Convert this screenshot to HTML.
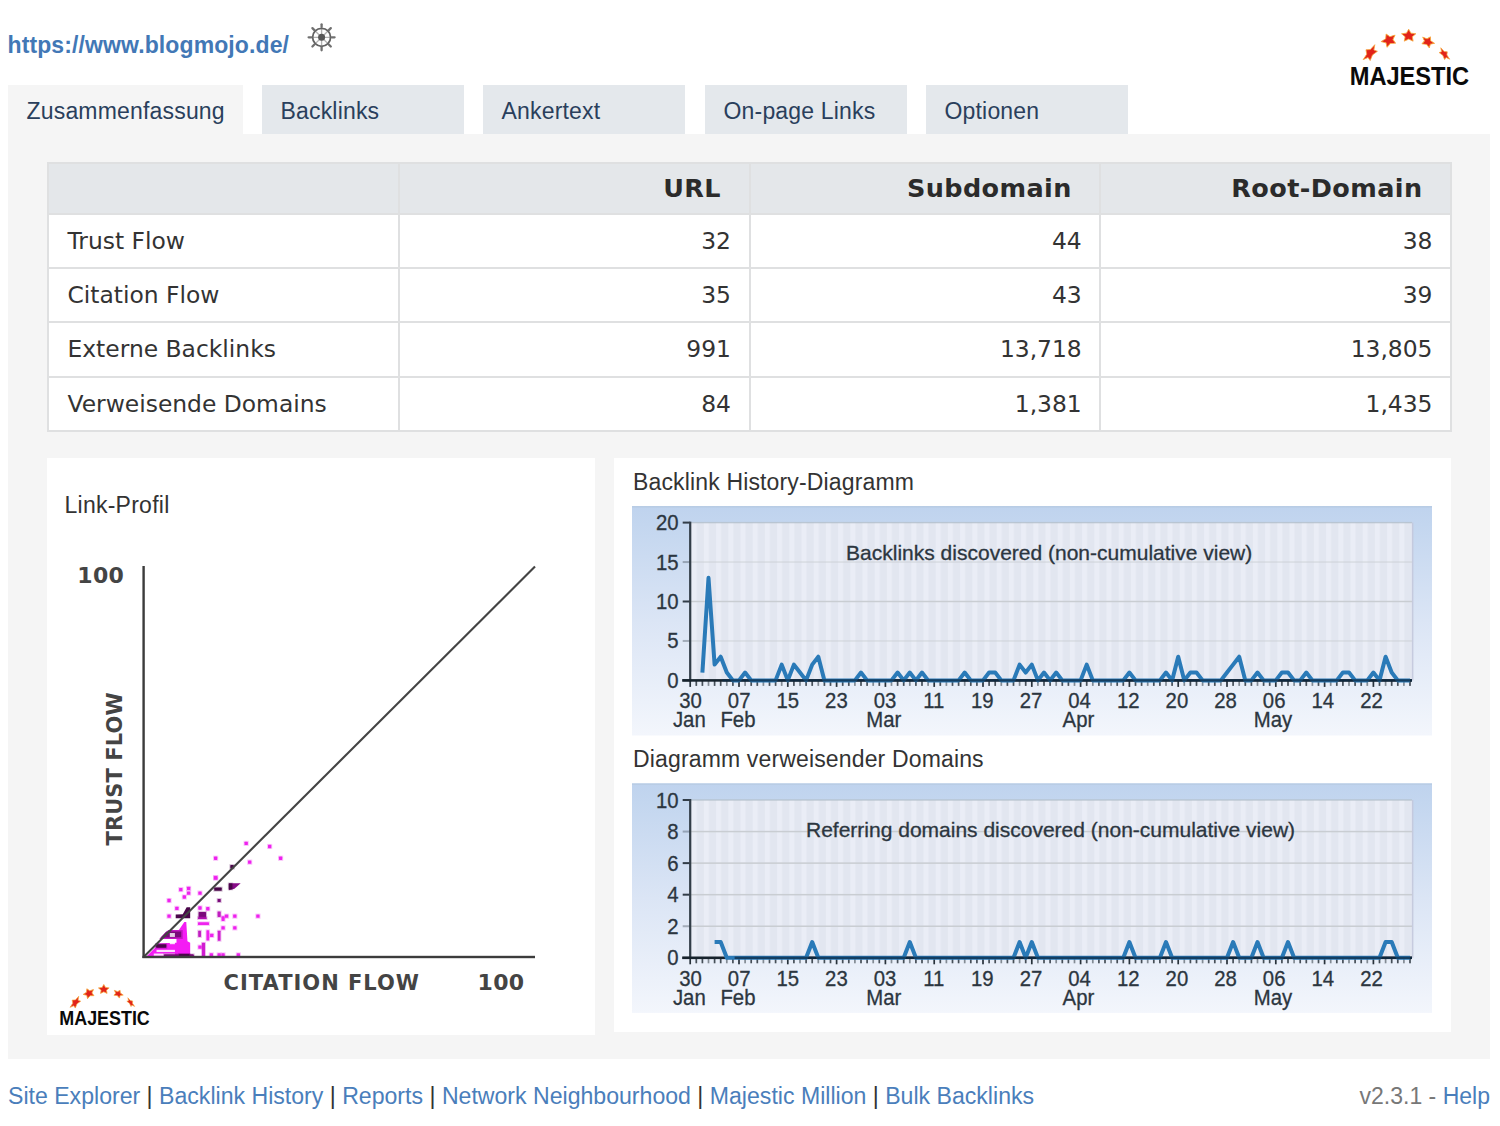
<!DOCTYPE html>
<html lang="de">
<head>
<meta charset="utf-8">
<title>Majestic Backlink Analyzer</title>
<style>
html,body{margin:0;padding:0;background:#fff;}
body{width:1500px;height:1126px;position:relative;overflow:hidden;font-family:"Liberation Sans",Arial,sans-serif;font-size:23px;color:#333;}
a{text-decoration:none;color:#4a7ebb;}
#url{position:absolute;left:7.5px;top:31.5px;font-weight:bold;font-size:23px;line-height:27px;color:#4278b6;white-space:nowrap;letter-spacing:0.11px;}
.tab{position:absolute;top:85px;height:49px;width:202px;background:#e4e8ec;color:#2a3f5c;font-size:23px;line-height:52px;box-sizing:border-box;padding-left:18.5px;white-space:nowrap;letter-spacing:0.18px;}
.tab.act{background:#f5f5f5;width:235px;}
#panel{position:absolute;left:8px;top:134px;width:1482px;height:924.5px;background:#f5f5f5;}
#tbl{position:absolute;left:47px;top:162px;width:1405px;border-collapse:collapse;font-family:"DejaVu Sans",Verdana,sans-serif;font-size:23.4px;color:#333;table-layout:fixed;background:#fff;}
#tbl td,#tbl th{border:2px solid #dfe0e1;padding:0 17.5px 0 18.5px;box-sizing:border-box;}
#tbl th{background:#e4e7ea;font-weight:bold;font-size:25.5px;letter-spacing:0.4px;text-align:right;height:50.7px;padding-right:27.5px;color:#2b2b2b;}
#tbl td{height:54.3px;text-align:right;}
#tbl td:first-child{text-align:left;}
.card{position:absolute;background:#fff;}
#c1{left:46.5px;top:457.5px;width:548.5px;height:577.7px;}
#c2{left:614px;top:457.5px;width:837px;height:574.5px;}
.h{position:absolute;font-size:23px;line-height:27px;color:#333;white-space:nowrap;}
#foot{position:absolute;left:8px;top:1082.5px;font-size:23.1px;line-height:27px;white-space:nowrap;color:#333;}
#ver{position:absolute;right:10px;top:1082.5px;font-size:23px;line-height:27px;white-space:nowrap;color:#777;}
#gfx{position:absolute;left:0;top:0;width:1500px;height:1126px;pointer-events:none;}
.ct{font-family:"Liberation Sans",Arial,sans-serif;font-size:21px;fill:#2c3640;stroke:#2c3640;stroke-width:0.3px;}
.ca{font-family:"Liberation Sans",Arial,sans-serif;font-size:21.3px;fill:#2c3640;stroke:#2c3640;stroke-width:0.3px;}
.sb{font-family:"DejaVu Sans",Verdana,sans-serif;font-weight:bold;font-size:21px;fill:#444;}
</style>
</head>
<body>
<div id="url">https://www.blogmojo.de/</div>
<div class="tab act" style="left:8px">Zusammenfassung</div>
<div class="tab" style="left:262px">Backlinks</div>
<div class="tab" style="left:483px">Ankertext</div>
<div class="tab" style="left:705px">On-page Links</div>
<div class="tab" style="left:926px">Optionen</div>
<div id="panel"></div>
<table id="tbl">
<tr><th></th><th>URL</th><th>Subdomain</th><th>Root-Domain</th></tr>
<tr><td>Trust Flow</td><td>32</td><td>44</td><td>38</td></tr>
<tr><td>Citation Flow</td><td>35</td><td>43</td><td>39</td></tr>
<tr><td>Externe Backlinks</td><td>991</td><td>13,718</td><td>13,805</td></tr>
<tr><td>Verweisende Domains</td><td>84</td><td>1,381</td><td>1,435</td></tr>
</table>
<div class="card" id="c1">
<div class="h" style="left:18px;top:34.5px;letter-spacing:0.25px">Link-Profil</div>
</div>
<div class="card" id="c2">
<div class="h" style="left:19px;top:11.5px;letter-spacing:0.15px">Backlink History-Diagramm</div>
<div class="h" style="left:19px;top:288.5px;letter-spacing:0.15px">Diagramm verweisender Domains</div>
</div>
<div id="foot"><a>Site Explorer</a> | <a>Backlink History</a> | <a>Reports</a> | <a>Network Neighbourhood</a> | <a>Majestic Million</a> | <a>Bulk Backlinks</a></div>
<div id="ver">v2.3.1 - <a>Help</a></div>
<svg id="gfx" width="1500" height="1126" viewBox="0 0 1500 1126">
<g id="wheel"><g stroke="#666" fill="none" stroke-linecap="round"><circle cx="321.6" cy="37.3" r="9.0" stroke-width="1.8" stroke="#626262"/><line x1="324.60" y1="37.30" x2="330.60" y2="37.30" stroke-width="1.3" opacity="0.5"/><line x1="331.80" y1="37.30" x2="334.60" y2="37.30" stroke-width="2.3" stroke="#707070"/><line x1="323.72" y1="39.42" x2="327.96" y2="43.66" stroke-width="1.3" opacity="0.5"/><line x1="328.81" y1="44.51" x2="330.79" y2="46.49" stroke-width="2.3" stroke="#707070"/><line x1="321.60" y1="40.30" x2="321.60" y2="46.30" stroke-width="1.3" opacity="0.5"/><line x1="321.60" y1="47.50" x2="321.60" y2="50.30" stroke-width="2.3" stroke="#707070"/><line x1="319.48" y1="39.42" x2="315.24" y2="43.66" stroke-width="1.3" opacity="0.5"/><line x1="314.39" y1="44.51" x2="312.41" y2="46.49" stroke-width="2.3" stroke="#707070"/><line x1="318.60" y1="37.30" x2="312.60" y2="37.30" stroke-width="1.3" opacity="0.5"/><line x1="311.40" y1="37.30" x2="308.60" y2="37.30" stroke-width="2.3" stroke="#707070"/><line x1="319.48" y1="35.18" x2="315.24" y2="30.94" stroke-width="1.3" opacity="0.5"/><line x1="314.39" y1="30.09" x2="312.41" y2="28.11" stroke-width="2.3" stroke="#707070"/><line x1="321.60" y1="34.30" x2="321.60" y2="28.30" stroke-width="1.3" opacity="0.5"/><line x1="321.60" y1="27.10" x2="321.60" y2="24.30" stroke-width="2.3" stroke="#707070"/><line x1="323.72" y1="35.18" x2="327.96" y2="30.94" stroke-width="1.3" opacity="0.5"/><line x1="328.81" y1="30.09" x2="330.79" y2="28.11" stroke-width="2.3" stroke="#707070"/><circle cx="321.6" cy="37.3" r="3.5" fill="#575757" stroke="none"/></g></g>
<g id="logo"><g><polygon transform="translate(1370.3,53.2) rotate(-52) scale(1,0.55)" points="0.00,-10.00 2.94,-4.05 9.51,-3.09 4.76,1.55 5.88,8.09 0.00,5.00 -5.88,8.09 -4.76,1.55 -9.51,-3.09 -2.94,-4.05" fill="#e2231a" stroke="#f7a83c" stroke-width="0.90" stroke-linejoin="round"/><polygon transform="translate(1389,40.2) rotate(-25) scale(1,0.85)" points="0.00,-8.00 2.35,-3.24 7.61,-2.47 3.80,1.24 4.70,6.47 0.00,4.00 -4.70,6.47 -3.80,1.24 -7.61,-2.47 -2.35,-3.24" fill="#e2231a" stroke="#f7a83c" stroke-width="0.90" stroke-linejoin="round"/><polygon transform="translate(1408.7,35.8) rotate(0) scale(1,0.88)" points="0.00,-7.50 2.20,-3.03 7.13,-2.32 3.57,1.16 4.41,6.07 0.00,3.75 -4.41,6.07 -3.57,1.16 -7.13,-2.32 -2.20,-3.03" fill="#e2231a" stroke="#f7a83c" stroke-width="0.90" stroke-linejoin="round"/><polygon transform="translate(1427.8,41.8) rotate(28) scale(1,0.8)" points="0.00,-7.00 2.06,-2.83 6.66,-2.16 3.33,1.08 4.11,5.66 0.00,3.50 -4.11,5.66 -3.33,1.08 -6.66,-2.16 -2.06,-2.83" fill="#e2231a" stroke="#f7a83c" stroke-width="0.90" stroke-linejoin="round"/><polygon transform="translate(1444.3,54.2) rotate(52) scale(1,0.5)" points="0.00,-7.60 2.23,-3.07 7.23,-2.35 3.61,1.17 4.47,6.15 0.00,3.80 -4.47,6.15 -3.61,1.17 -7.23,-2.35 -2.23,-3.07" fill="#e2231a" stroke="#f7a83c" stroke-width="0.90" stroke-linejoin="round"/><text x="1349.7" y="85.4" font-family="Liberation Sans, Arial, sans-serif" font-weight="bold" font-size="26" textLength="119.5" lengthAdjust="spacingAndGlyphs" fill="#0a0a0a">MAJESTIC</text></g></g>
<g id="scatter">
<polygon points="145.95,956.90 155.34,947.50 155.34,943.59 176.49,942.81 176.49,933.41 184.32,922.06 186.27,922.06 187.45,941.24 190.19,942.81 190.19,954.55 194.10,954.94 194.10,956.90" fill="#f41cf4"/><rect x="156.52" y="949.83" width="18.40" height="2.20" fill="#fff" opacity="0.85"/><rect x="169.83" y="942.00" width="5.09" height="2.20" fill="#fff" opacity="0.85"/><rect x="169.83" y="933.78" width="5.09" height="2.20" fill="#fff" opacity="0.85"/><rect x="153.78" y="953.55" width="21.14" height="2.20" fill="#fff" opacity="0.85"/><polygon points="159.26,938.89 168.26,929.89 182.75,929.89 182.75,938.89" fill="#c416c4"/><polygon points="160.43,937.72 166.31,931.45 181.18,931.45 181.18,937.32" fill="#7a0a7a"/><rect x="169.83" y="933.02" width="5.09" height="3.92" fill="#fff" opacity="0.8"/><rect x="155.23" y="943.28" width="11.98" height="5.32" fill="#4a064a" opacity="0.28"/><rect x="156.13" y="944.18" width="10.18" height="3.52" rx="0.6" fill="#4a064a" opacity="1"/><rect x="163.06" y="953.46" width="31.55" height="4.54" fill="#7a0a7a" opacity="0.28"/><rect x="163.96" y="954.36" width="29.75" height="2.74" rx="0.6" fill="#7a0a7a" opacity="1"/><rect x="178.33" y="953.06" width="11.98" height="4.93" fill="#4a064a" opacity="0.28"/><rect x="179.23" y="953.96" width="10.18" height="3.13" rx="0.6" fill="#4a064a" opacity="1"/><polygon points="175.70,918.14 175.70,914.62 182.75,914.23 186.66,907.18 190.19,907.18 190.19,918.14" fill="#4a064a"/><rect x="213.07" y="875.25" width="5.13" height="5.13" fill="#ee22ee" opacity="0.28"/><rect x="213.97" y="876.15" width="3.33" height="3.33" rx="0.6" fill="#ee22ee" opacity="1"/><rect x="178.23" y="887.00" width="5.13" height="5.13" fill="#ee22ee" opacity="0.28"/><rect x="179.13" y="887.90" width="3.33" height="3.33" rx="0.6" fill="#ee22ee" opacity="1"/><rect x="186.06" y="885.82" width="5.13" height="5.13" fill="#ee22ee" opacity="0.28"/><rect x="186.96" y="886.72" width="3.33" height="3.33" rx="0.6" fill="#ee22ee" opacity="1"/><rect x="186.06" y="890.52" width="5.13" height="5.13" fill="#ee22ee" opacity="0.28"/><rect x="186.96" y="891.42" width="3.33" height="3.33" rx="0.6" fill="#ee22ee" opacity="1"/><rect x="181.75" y="894.44" width="5.13" height="5.13" fill="#ee22ee" opacity="0.28"/><rect x="182.65" y="895.34" width="3.33" height="3.33" rx="0.6" fill="#ee22ee" opacity="1"/><rect x="197.41" y="890.52" width="5.13" height="5.13" fill="#ee22ee" opacity="0.28"/><rect x="198.31" y="891.42" width="3.33" height="3.33" rx="0.6" fill="#ee22ee" opacity="1"/><rect x="166.48" y="897.96" width="5.13" height="5.13" fill="#ee22ee" opacity="0.28"/><rect x="167.38" y="898.86" width="3.33" height="3.33" rx="0.6" fill="#ee22ee" opacity="1"/><rect x="174.31" y="905.79" width="5.13" height="5.13" fill="#ee22ee" opacity="0.28"/><rect x="175.21" y="906.69" width="3.33" height="3.33" rx="0.6" fill="#ee22ee" opacity="1"/><rect x="166.48" y="913.62" width="5.13" height="5.13" fill="#ee22ee" opacity="0.28"/><rect x="167.38" y="914.52" width="3.33" height="3.33" rx="0.6" fill="#ee22ee" opacity="1"/><rect x="197.41" y="905.40" width="5.13" height="5.13" fill="#ee22ee" opacity="0.28"/><rect x="198.31" y="906.30" width="3.33" height="3.33" rx="0.6" fill="#ee22ee" opacity="1"/><rect x="205.24" y="906.18" width="5.13" height="5.13" fill="#ee22ee" opacity="0.28"/><rect x="206.14" y="907.08" width="3.33" height="3.33" rx="0.6" fill="#ee22ee" opacity="1"/><rect x="224.03" y="913.62" width="5.13" height="5.13" fill="#ee22ee" opacity="0.28"/><rect x="224.93" y="914.52" width="3.33" height="3.33" rx="0.6" fill="#ee22ee" opacity="1"/><rect x="232.26" y="913.62" width="5.13" height="5.13" fill="#ee22ee" opacity="0.28"/><rect x="233.16" y="914.52" width="3.33" height="3.33" rx="0.6" fill="#ee22ee" opacity="1"/><rect x="255.35" y="913.62" width="5.13" height="5.13" fill="#ee22ee" opacity="0.28"/><rect x="256.25" y="914.52" width="3.33" height="3.33" rx="0.6" fill="#ee22ee" opacity="1"/><rect x="220.51" y="925.37" width="5.13" height="5.13" fill="#ee22ee" opacity="0.28"/><rect x="221.41" y="926.27" width="3.33" height="3.33" rx="0.6" fill="#ee22ee" opacity="1"/><rect x="232.26" y="925.37" width="5.13" height="5.13" fill="#ee22ee" opacity="0.28"/><rect x="233.16" y="926.27" width="3.33" height="3.33" rx="0.6" fill="#ee22ee" opacity="1"/><rect x="209.16" y="932.80" width="5.13" height="5.13" fill="#ee22ee" opacity="0.28"/><rect x="210.06" y="933.70" width="3.33" height="3.33" rx="0.6" fill="#ee22ee" opacity="1"/><rect x="197.41" y="944.55" width="5.13" height="5.13" fill="#ee22ee" opacity="0.28"/><rect x="198.31" y="945.45" width="3.33" height="3.33" rx="0.6" fill="#ee22ee" opacity="1"/><rect x="208.77" y="952.38" width="5.13" height="5.13" fill="#ee22ee" opacity="0.28"/><rect x="209.67" y="953.28" width="3.33" height="3.33" rx="0.6" fill="#ee22ee" opacity="1"/><rect x="216.60" y="952.38" width="5.13" height="5.13" fill="#ee22ee" opacity="0.28"/><rect x="217.50" y="953.28" width="3.33" height="3.33" rx="0.6" fill="#ee22ee" opacity="1"/><rect x="220.51" y="952.38" width="5.13" height="5.13" fill="#ee22ee" opacity="0.28"/><rect x="221.41" y="953.28" width="3.33" height="3.33" rx="0.6" fill="#ee22ee" opacity="1"/><rect x="235.78" y="952.38" width="5.13" height="5.13" fill="#ee22ee" opacity="0.28"/><rect x="236.68" y="953.28" width="3.33" height="3.33" rx="0.6" fill="#ee22ee" opacity="1"/><rect x="243.61" y="840.80" width="5.13" height="5.13" fill="#ee22ee" opacity="0.28"/><rect x="244.51" y="841.70" width="3.33" height="3.33" rx="0.6" fill="#ee22ee" opacity="1"/><rect x="267.10" y="843.93" width="5.13" height="5.13" fill="#ee22ee" opacity="0.28"/><rect x="268.00" y="844.83" width="3.33" height="3.33" rx="0.6" fill="#ee22ee" opacity="1"/><rect x="278.06" y="855.68" width="5.13" height="5.13" fill="#ee22ee" opacity="0.28"/><rect x="278.96" y="856.58" width="3.33" height="3.33" rx="0.6" fill="#ee22ee" opacity="1"/><rect x="247.13" y="859.59" width="5.13" height="5.13" fill="#ee22ee" opacity="0.28"/><rect x="248.03" y="860.49" width="3.33" height="3.33" rx="0.6" fill="#ee22ee" opacity="1"/><rect x="213.07" y="855.68" width="5.13" height="5.13" fill="#ee22ee" opacity="0.28"/><rect x="213.97" y="856.58" width="3.33" height="3.33" rx="0.6" fill="#ee22ee" opacity="1"/><rect x="213.07" y="875.25" width="5.13" height="5.13" fill="#ee22ee" opacity="0.28"/><rect x="213.97" y="876.15" width="3.33" height="3.33" rx="0.6" fill="#ee22ee" opacity="1"/><rect x="197.12" y="921.35" width="12.76" height="4.54" fill="#ee22ee" opacity="0.28"/><rect x="198.02" y="922.25" width="10.96" height="2.74" rx="0.6" fill="#ee22ee" opacity="1"/><rect x="197.31" y="929.77" width="4.54" height="8.06" fill="#c01cc0" opacity="0.28"/><rect x="198.21" y="930.67" width="2.74" height="6.26" rx="0.6" fill="#c01cc0" opacity="1"/><rect x="205.54" y="929.38" width="4.54" height="11.98" fill="#ee22ee" opacity="0.28"/><rect x="206.44" y="930.28" width="2.74" height="10.18" rx="0.6" fill="#ee22ee" opacity="1"/><rect x="216.89" y="929.77" width="4.54" height="11.98" fill="#d01cd0" opacity="0.28"/><rect x="217.79" y="930.67" width="2.74" height="10.18" rx="0.6" fill="#d01cd0" opacity="1"/><rect x="201.03" y="941.91" width="4.93" height="15.89" fill="#d01cd0" opacity="0.28"/><rect x="201.93" y="942.81" width="3.13" height="14.09" rx="0.6" fill="#d01cd0" opacity="1"/><rect x="216.69" y="910.59" width="4.93" height="7.28" fill="#c01cc0" opacity="0.28"/><rect x="217.59" y="911.49" width="3.13" height="5.48" rx="0.6" fill="#c01cc0" opacity="1"/><rect x="220.61" y="915.28" width="4.93" height="6.50" fill="#ee22ee" opacity="0.28"/><rect x="221.51" y="916.18" width="3.13" height="4.70" rx="0.6" fill="#ee22ee" opacity="1"/><rect x="197.71" y="911.17" width="9.24" height="7.67" fill="#7a0a7a" opacity="0.28"/><rect x="198.61" y="912.07" width="7.44" height="5.87" rx="0.6" fill="#7a0a7a" opacity="1"/><rect x="197.12" y="916.26" width="10.41" height="3.76" fill="#b010b0" opacity="0.28"/><rect x="198.02" y="917.16" width="8.61" height="1.96" rx="0.6" fill="#b010b0" opacity="1"/><rect x="213.37" y="886.70" width="9.24" height="4.93" fill="#4a064a" opacity="0.28"/><rect x="214.27" y="887.60" width="7.44" height="3.13" rx="0.6" fill="#4a064a" opacity="1"/><rect x="216.69" y="898.06" width="4.93" height="4.93" fill="#7a0a7a" opacity="0.28"/><rect x="217.59" y="898.96" width="3.13" height="3.13" rx="0.6" fill="#7a0a7a" opacity="1"/><rect x="229.42" y="864.19" width="5.32" height="5.32" fill="#4a064a" opacity="0.28"/><rect x="230.32" y="865.09" width="3.52" height="3.52" rx="0.6" fill="#4a064a" opacity="1"/><polygon points="228.95,883.30 240.69,883.30 234.43,888.78 228.95,890.35" fill="#8a0c8a"/><rect x="227.85" y="882.59" width="5.32" height="7.67" fill="#4a064a" opacity="0.28"/><rect x="228.75" y="883.49" width="3.52" height="5.87" rx="0.6" fill="#4a064a" opacity="1"/><line x1="143.6" y1="956.9" x2="535" y2="566.5" stroke="#444" stroke-width="2.1"/><rect x="142.4" y="566" width="2.4" height="392" fill="#3c3c3c"/><rect x="142.4" y="955.8" width="392.6" height="2.4" fill="#3c3c3c"/>
<text x="77.3" y="583.2" class="sb" style="font-size:22px;letter-spacing:0.3px">100</text>
<text x="477.6" y="989.6" class="sb" style="font-size:22px;letter-spacing:0.3px">100</text>
<text x="223.6" y="989.6" class="sb" textLength="195.4" lengthAdjust="spacing">CITATION FLOW</text>
<text transform="translate(122.4,845.4) rotate(-90)" class="sb" textLength="153" lengthAdjust="spacing">TRUST FLOW</text>
</g>
<g id="logo2"><g><polygon transform="translate(75.4,1002.6) rotate(-52) scale(1,0.55)" points="0.00,-7.40 2.17,-2.99 7.04,-2.29 3.52,1.14 4.35,5.99 0.00,3.70 -4.35,5.99 -3.52,1.14 -7.04,-2.29 -2.17,-2.99" fill="#e2231a" stroke="#f7a83c" stroke-width="0.80" stroke-linejoin="round"/><polygon transform="translate(89,993.4) rotate(-25) scale(1,0.85)" points="0.00,-6.00 1.76,-2.43 5.71,-1.85 2.85,0.93 3.53,4.85 0.00,3.00 -3.53,4.85 -2.85,0.93 -5.71,-1.85 -1.76,-2.43" fill="#e2231a" stroke="#f7a83c" stroke-width="0.80" stroke-linejoin="round"/><polygon transform="translate(103.8,989.4) rotate(0) scale(1,0.88)" points="0.00,-5.60 1.65,-2.27 5.33,-1.73 2.66,0.87 3.29,4.53 0.00,2.80 -3.29,4.53 -2.66,0.87 -5.33,-1.73 -1.65,-2.27" fill="#e2231a" stroke="#f7a83c" stroke-width="0.80" stroke-linejoin="round"/><polygon transform="translate(118.2,993.8) rotate(28) scale(1,0.75)" points="0.00,-5.30 1.56,-2.14 5.04,-1.64 2.52,0.82 3.12,4.29 0.00,2.65 -3.12,4.29 -2.52,0.82 -5.04,-1.64 -1.56,-2.14" fill="#e2231a" stroke="#f7a83c" stroke-width="0.80" stroke-linejoin="round"/><polygon transform="translate(130.6,1002.6) rotate(52) scale(1,0.45)" points="0.00,-5.80 1.70,-2.35 5.52,-1.79 2.76,0.90 3.41,4.69 0.00,2.90 -3.41,4.69 -2.76,0.90 -5.52,-1.79 -1.70,-2.35" fill="#e2231a" stroke="#f7a83c" stroke-width="0.80" stroke-linejoin="round"/><text x="59.3" y="1025" font-family="Liberation Sans, Arial, sans-serif" font-weight="bold" font-size="20" textLength="90.5" lengthAdjust="spacingAndGlyphs" fill="#0a0a0a">MAJESTIC</text></g></g>
<g id="chart1"><defs><linearGradient id="bgc506" x1="0" y1="0" x2="0" y2="1"><stop offset="0" stop-color="#bfd3ee"/><stop offset="0.08" stop-color="#c3d6ef"/><stop offset="0.5" stop-color="#dbe5f5"/><stop offset="1" stop-color="#f3f6fc"/></linearGradient><pattern id="stc506" x="691.7" y="0" width="12.2" height="10" patternUnits="userSpaceOnUse"><rect x="0" y="0" width="5" height="10" fill="#f1f4fc"/></pattern><linearGradient id="hzc506" x1="0" y1="0" x2="1" y2="0"><stop offset="0" stop-color="#b9cdec" stop-opacity="0.55"/><stop offset="0.12" stop-color="#c9d9f0" stop-opacity="0"/><stop offset="0.9" stop-color="#c9d9f0" stop-opacity="0"/><stop offset="1" stop-color="#bdd0ee" stop-opacity="0.5"/></linearGradient></defs><rect x="632" y="506" width="800" height="229.5" fill="url(#bgc506)"/><rect x="632" y="506" width="800" height="1.6" fill="#b7cbe2" opacity="0.8"/><rect x="690.2" y="522.6" width="721.8" height="157.8" fill="#e2e6f0"/><rect x="690.2" y="522.6" width="721.8" height="157.8" fill="url(#stc506)" opacity="0.5"/><rect x="690.2" y="521.9" width="721.8" height="1.4" fill="#b3bfca" opacity="0.8"/><rect x="1411.8" y="522.6" width="1.6" height="157.8" fill="#c3c8dc" opacity="0.9"/><rect x="690.2" y="640.20" width="721.8" height="1.5" fill="#c9cdd2" opacity="0.55"/><rect x="690.2" y="600.75" width="721.8" height="1.5" fill="#c9cdd2" opacity="1"/><rect x="690.2" y="561.30" width="721.8" height="1.5" fill="#c9cdd2" opacity="0.55"/><rect x="689.1" y="521.60" width="2.2" height="159.80" fill="#323d48"/><rect x="682.7" y="679.40" width="7" height="2" fill="#323d48" opacity="1"/><text transform="translate(678.6,687.90) scale(0.955,1)" text-anchor="end" class="ca">0</text><rect x="682.7" y="639.95" width="7" height="2" fill="#323d48" opacity="0.35"/><text transform="translate(678.6,648.45) scale(0.955,1)" text-anchor="end" class="ca">5</text><rect x="682.7" y="600.50" width="7" height="2" fill="#323d48" opacity="1"/><text transform="translate(678.6,609.00) scale(0.955,1)" text-anchor="end" class="ca">10</text><rect x="682.7" y="561.05" width="7" height="2" fill="#323d48" opacity="0.35"/><text transform="translate(678.6,569.55) scale(0.955,1)" text-anchor="end" class="ca">15</text><rect x="682.7" y="521.60" width="7" height="2" fill="#323d48" opacity="1"/><text transform="translate(678.6,530.10) scale(0.955,1)" text-anchor="end" class="ca">20</text><rect x="689.35" y="680.40" width="1.7" height="6.5" fill="#1d2730" opacity="0.95"/><rect x="695.45" y="680.40" width="1.7" height="5.5" fill="#1d2730" opacity="0.8"/><rect x="701.55" y="680.40" width="1.7" height="5.5" fill="#1d2730" opacity="0.8"/><rect x="707.65" y="680.40" width="1.7" height="5.5" fill="#1d2730" opacity="0.5"/><rect x="713.75" y="680.40" width="1.7" height="5.5" fill="#1d2730" opacity="0.8"/><rect x="719.85" y="680.40" width="1.7" height="5.5" fill="#1d2730" opacity="0.8"/><rect x="725.95" y="680.40" width="1.7" height="5.5" fill="#1d2730" opacity="0.5"/><rect x="732.05" y="680.40" width="1.7" height="5.5" fill="#1d2730" opacity="0.8"/><rect x="738.15" y="680.40" width="1.7" height="6.5" fill="#1d2730" opacity="0.95"/><rect x="744.25" y="680.40" width="1.7" height="5.5" fill="#1d2730" opacity="0.5"/><rect x="750.35" y="680.40" width="1.7" height="5.5" fill="#1d2730" opacity="0.8"/><rect x="756.45" y="680.40" width="1.7" height="5.5" fill="#1d2730" opacity="0.8"/><rect x="762.55" y="680.40" width="1.7" height="5.5" fill="#1d2730" opacity="0.5"/><rect x="768.65" y="680.40" width="1.7" height="5.5" fill="#1d2730" opacity="0.8"/><rect x="774.75" y="680.40" width="1.7" height="5.5" fill="#1d2730" opacity="0.8"/><rect x="780.85" y="680.40" width="1.7" height="5.5" fill="#1d2730" opacity="0.5"/><rect x="786.95" y="680.40" width="1.7" height="6.5" fill="#1d2730" opacity="0.95"/><rect x="793.05" y="680.40" width="1.7" height="5.5" fill="#1d2730" opacity="0.8"/><rect x="799.15" y="680.40" width="1.7" height="5.5" fill="#1d2730" opacity="0.5"/><rect x="805.25" y="680.40" width="1.7" height="5.5" fill="#1d2730" opacity="0.8"/><rect x="811.35" y="680.40" width="1.7" height="5.5" fill="#1d2730" opacity="0.8"/><rect x="817.45" y="680.40" width="1.7" height="5.5" fill="#1d2730" opacity="0.5"/><rect x="823.55" y="680.40" width="1.7" height="5.5" fill="#1d2730" opacity="0.8"/><rect x="829.65" y="680.40" width="1.7" height="5.5" fill="#1d2730" opacity="0.8"/><rect x="835.75" y="680.40" width="1.7" height="6.5" fill="#1d2730" opacity="0.95"/><rect x="841.85" y="680.40" width="1.7" height="5.5" fill="#1d2730" opacity="0.8"/><rect x="847.95" y="680.40" width="1.7" height="5.5" fill="#1d2730" opacity="0.8"/><rect x="854.05" y="680.40" width="1.7" height="5.5" fill="#1d2730" opacity="0.5"/><rect x="860.15" y="680.40" width="1.7" height="5.5" fill="#1d2730" opacity="0.8"/><rect x="866.25" y="680.40" width="1.7" height="5.5" fill="#1d2730" opacity="0.8"/><rect x="872.35" y="680.40" width="1.7" height="5.5" fill="#1d2730" opacity="0.5"/><rect x="878.45" y="680.40" width="1.7" height="5.5" fill="#1d2730" opacity="0.8"/><rect x="884.55" y="680.40" width="1.7" height="6.5" fill="#1d2730" opacity="0.95"/><rect x="890.65" y="680.40" width="1.7" height="5.5" fill="#1d2730" opacity="0.5"/><rect x="896.75" y="680.40" width="1.7" height="5.5" fill="#1d2730" opacity="0.8"/><rect x="902.85" y="680.40" width="1.7" height="5.5" fill="#1d2730" opacity="0.8"/><rect x="908.95" y="680.40" width="1.7" height="5.5" fill="#1d2730" opacity="0.5"/><rect x="915.05" y="680.40" width="1.7" height="5.5" fill="#1d2730" opacity="0.8"/><rect x="921.15" y="680.40" width="1.7" height="5.5" fill="#1d2730" opacity="0.8"/><rect x="927.25" y="680.40" width="1.7" height="5.5" fill="#1d2730" opacity="0.5"/><rect x="933.35" y="680.40" width="1.7" height="6.5" fill="#1d2730" opacity="0.95"/><rect x="939.45" y="680.40" width="1.7" height="5.5" fill="#1d2730" opacity="0.8"/><rect x="945.55" y="680.40" width="1.7" height="5.5" fill="#1d2730" opacity="0.5"/><rect x="951.65" y="680.40" width="1.7" height="5.5" fill="#1d2730" opacity="0.8"/><rect x="957.75" y="680.40" width="1.7" height="5.5" fill="#1d2730" opacity="0.8"/><rect x="963.85" y="680.40" width="1.7" height="5.5" fill="#1d2730" opacity="0.5"/><rect x="969.95" y="680.40" width="1.7" height="5.5" fill="#1d2730" opacity="0.8"/><rect x="976.05" y="680.40" width="1.7" height="5.5" fill="#1d2730" opacity="0.8"/><rect x="982.15" y="680.40" width="1.7" height="6.5" fill="#1d2730" opacity="0.95"/><rect x="988.25" y="680.40" width="1.7" height="5.5" fill="#1d2730" opacity="0.8"/><rect x="994.35" y="680.40" width="1.7" height="5.5" fill="#1d2730" opacity="0.8"/><rect x="1000.45" y="680.40" width="1.7" height="5.5" fill="#1d2730" opacity="0.5"/><rect x="1006.55" y="680.40" width="1.7" height="5.5" fill="#1d2730" opacity="0.8"/><rect x="1012.65" y="680.40" width="1.7" height="5.5" fill="#1d2730" opacity="0.8"/><rect x="1018.75" y="680.40" width="1.7" height="5.5" fill="#1d2730" opacity="0.5"/><rect x="1024.85" y="680.40" width="1.7" height="5.5" fill="#1d2730" opacity="0.8"/><rect x="1030.95" y="680.40" width="1.7" height="6.5" fill="#1d2730" opacity="0.95"/><rect x="1037.05" y="680.40" width="1.7" height="5.5" fill="#1d2730" opacity="0.5"/><rect x="1043.15" y="680.40" width="1.7" height="5.5" fill="#1d2730" opacity="0.8"/><rect x="1049.25" y="680.40" width="1.7" height="5.5" fill="#1d2730" opacity="0.8"/><rect x="1055.35" y="680.40" width="1.7" height="5.5" fill="#1d2730" opacity="0.5"/><rect x="1061.45" y="680.40" width="1.7" height="5.5" fill="#1d2730" opacity="0.8"/><rect x="1067.55" y="680.40" width="1.7" height="5.5" fill="#1d2730" opacity="0.8"/><rect x="1073.65" y="680.40" width="1.7" height="5.5" fill="#1d2730" opacity="0.5"/><rect x="1079.75" y="680.40" width="1.7" height="6.5" fill="#1d2730" opacity="0.95"/><rect x="1085.85" y="680.40" width="1.7" height="5.5" fill="#1d2730" opacity="0.8"/><rect x="1091.95" y="680.40" width="1.7" height="5.5" fill="#1d2730" opacity="0.5"/><rect x="1098.05" y="680.40" width="1.7" height="5.5" fill="#1d2730" opacity="0.8"/><rect x="1104.15" y="680.40" width="1.7" height="5.5" fill="#1d2730" opacity="0.8"/><rect x="1110.25" y="680.40" width="1.7" height="5.5" fill="#1d2730" opacity="0.5"/><rect x="1116.35" y="680.40" width="1.7" height="5.5" fill="#1d2730" opacity="0.8"/><rect x="1122.45" y="680.40" width="1.7" height="5.5" fill="#1d2730" opacity="0.8"/><rect x="1128.55" y="680.40" width="1.7" height="6.5" fill="#1d2730" opacity="0.95"/><rect x="1134.65" y="680.40" width="1.7" height="5.5" fill="#1d2730" opacity="0.8"/><rect x="1140.75" y="680.40" width="1.7" height="5.5" fill="#1d2730" opacity="0.8"/><rect x="1146.85" y="680.40" width="1.7" height="5.5" fill="#1d2730" opacity="0.5"/><rect x="1152.95" y="680.40" width="1.7" height="5.5" fill="#1d2730" opacity="0.8"/><rect x="1159.05" y="680.40" width="1.7" height="5.5" fill="#1d2730" opacity="0.8"/><rect x="1165.15" y="680.40" width="1.7" height="5.5" fill="#1d2730" opacity="0.5"/><rect x="1171.25" y="680.40" width="1.7" height="5.5" fill="#1d2730" opacity="0.8"/><rect x="1177.35" y="680.40" width="1.7" height="6.5" fill="#1d2730" opacity="0.95"/><rect x="1183.45" y="680.40" width="1.7" height="5.5" fill="#1d2730" opacity="0.5"/><rect x="1189.55" y="680.40" width="1.7" height="5.5" fill="#1d2730" opacity="0.8"/><rect x="1195.65" y="680.40" width="1.7" height="5.5" fill="#1d2730" opacity="0.8"/><rect x="1201.75" y="680.40" width="1.7" height="5.5" fill="#1d2730" opacity="0.5"/><rect x="1207.85" y="680.40" width="1.7" height="5.5" fill="#1d2730" opacity="0.8"/><rect x="1213.95" y="680.40" width="1.7" height="5.5" fill="#1d2730" opacity="0.8"/><rect x="1220.05" y="680.40" width="1.7" height="5.5" fill="#1d2730" opacity="0.5"/><rect x="1226.15" y="680.40" width="1.7" height="6.5" fill="#1d2730" opacity="0.95"/><rect x="1232.25" y="680.40" width="1.7" height="5.5" fill="#1d2730" opacity="0.8"/><rect x="1238.35" y="680.40" width="1.7" height="5.5" fill="#1d2730" opacity="0.5"/><rect x="1244.45" y="680.40" width="1.7" height="5.5" fill="#1d2730" opacity="0.8"/><rect x="1250.55" y="680.40" width="1.7" height="5.5" fill="#1d2730" opacity="0.8"/><rect x="1256.65" y="680.40" width="1.7" height="5.5" fill="#1d2730" opacity="0.5"/><rect x="1262.75" y="680.40" width="1.7" height="5.5" fill="#1d2730" opacity="0.8"/><rect x="1268.85" y="680.40" width="1.7" height="5.5" fill="#1d2730" opacity="0.8"/><rect x="1274.95" y="680.40" width="1.7" height="6.5" fill="#1d2730" opacity="0.95"/><rect x="1281.05" y="680.40" width="1.7" height="5.5" fill="#1d2730" opacity="0.8"/><rect x="1287.15" y="680.40" width="1.7" height="5.5" fill="#1d2730" opacity="0.8"/><rect x="1293.25" y="680.40" width="1.7" height="5.5" fill="#1d2730" opacity="0.5"/><rect x="1299.35" y="680.40" width="1.7" height="5.5" fill="#1d2730" opacity="0.8"/><rect x="1305.45" y="680.40" width="1.7" height="5.5" fill="#1d2730" opacity="0.8"/><rect x="1311.55" y="680.40" width="1.7" height="5.5" fill="#1d2730" opacity="0.5"/><rect x="1317.65" y="680.40" width="1.7" height="5.5" fill="#1d2730" opacity="0.8"/><rect x="1323.75" y="680.40" width="1.7" height="6.5" fill="#1d2730" opacity="0.95"/><rect x="1329.85" y="680.40" width="1.7" height="5.5" fill="#1d2730" opacity="0.5"/><rect x="1335.95" y="680.40" width="1.7" height="5.5" fill="#1d2730" opacity="0.8"/><rect x="1342.05" y="680.40" width="1.7" height="5.5" fill="#1d2730" opacity="0.8"/><rect x="1348.15" y="680.40" width="1.7" height="5.5" fill="#1d2730" opacity="0.5"/><rect x="1354.25" y="680.40" width="1.7" height="5.5" fill="#1d2730" opacity="0.8"/><rect x="1360.35" y="680.40" width="1.7" height="5.5" fill="#1d2730" opacity="0.8"/><rect x="1366.45" y="680.40" width="1.7" height="5.5" fill="#1d2730" opacity="0.5"/><rect x="1372.55" y="680.40" width="1.7" height="6.5" fill="#1d2730" opacity="0.95"/><rect x="1378.65" y="680.40" width="1.7" height="5.5" fill="#1d2730" opacity="0.8"/><rect x="1384.75" y="680.40" width="1.7" height="5.5" fill="#1d2730" opacity="0.5"/><rect x="1390.85" y="680.40" width="1.7" height="5.5" fill="#1d2730" opacity="0.8"/><rect x="1396.95" y="680.40" width="1.7" height="5.5" fill="#1d2730" opacity="0.8"/><rect x="1403.05" y="680.40" width="1.7" height="5.5" fill="#1d2730" opacity="0.5"/><rect x="1409.15" y="680.40" width="1.7" height="5.5" fill="#1d2730" opacity="0.8"/><text transform="translate(690.50,708.40) scale(0.955,1)" text-anchor="middle" class="ca">30</text><text transform="translate(689.30,727.30) scale(0.955,1)" text-anchor="middle" class="ca">Jan</text><text transform="translate(739.14,708.40) scale(0.955,1)" text-anchor="middle" class="ca">07</text><text transform="translate(737.94,727.30) scale(0.955,1)" text-anchor="middle" class="ca">Feb</text><text transform="translate(787.78,708.40) scale(0.955,1)" text-anchor="middle" class="ca">15</text><text transform="translate(836.42,708.40) scale(0.955,1)" text-anchor="middle" class="ca">23</text><text transform="translate(885.06,708.40) scale(0.955,1)" text-anchor="middle" class="ca">03</text><text transform="translate(883.86,727.30) scale(0.955,1)" text-anchor="middle" class="ca">Mar</text><text transform="translate(933.70,708.40) scale(0.955,1)" text-anchor="middle" class="ca">11</text><text transform="translate(982.34,708.40) scale(0.955,1)" text-anchor="middle" class="ca">19</text><text transform="translate(1030.98,708.40) scale(0.955,1)" text-anchor="middle" class="ca">27</text><text transform="translate(1079.62,708.40) scale(0.955,1)" text-anchor="middle" class="ca">04</text><text transform="translate(1078.42,727.30) scale(0.955,1)" text-anchor="middle" class="ca">Apr</text><text transform="translate(1128.26,708.40) scale(0.955,1)" text-anchor="middle" class="ca">12</text><text transform="translate(1176.90,708.40) scale(0.955,1)" text-anchor="middle" class="ca">20</text><text transform="translate(1225.54,708.40) scale(0.955,1)" text-anchor="middle" class="ca">28</text><text transform="translate(1274.18,708.40) scale(0.955,1)" text-anchor="middle" class="ca">06</text><text transform="translate(1272.98,727.30) scale(0.955,1)" text-anchor="middle" class="ca">May</text><text transform="translate(1322.82,708.40) scale(0.955,1)" text-anchor="middle" class="ca">14</text><text transform="translate(1371.46,708.40) scale(0.955,1)" text-anchor="middle" class="ca">22</text><text x="846.1" y="559.90" class="ct">Backlinks discovered (non-cumulative view)</text><rect x="682.2" y="679.10" width="729.8" height="2.6" fill="#16222c"/><polyline points="702.40,672.51 708.50,577.83 714.60,664.62 720.70,656.73 726.80,672.51 732.90,680.40 739.00,680.40 745.10,672.51 751.20,680.40 757.30,680.40 763.40,680.40 769.50,680.40 775.60,680.40 781.70,664.62 787.80,680.40 793.90,664.62 800.00,672.51 806.10,680.40 812.20,664.62 818.30,656.73 824.40,680.40 830.50,680.40 836.60,680.40 842.70,680.40 848.80,680.40 854.90,680.40 861.00,672.51 867.10,680.40 873.20,680.40 879.30,680.40 885.40,680.40 891.50,680.40 897.60,672.51 903.70,680.40 909.80,672.51 915.90,680.40 922.00,672.51 928.10,680.40 934.20,680.40 940.30,680.40 946.40,680.40 952.50,680.40 958.60,680.40 964.70,672.51 970.80,680.40 976.90,680.40 983.00,680.40 989.10,672.51 995.20,672.51 1001.30,680.40 1007.40,680.40 1013.50,680.40 1019.60,664.62 1025.70,672.51 1031.80,664.62 1037.90,680.40 1044.00,672.51 1050.10,680.40 1056.20,672.51 1062.30,680.40 1068.40,680.40 1074.50,680.40 1080.60,680.40 1086.70,664.62 1092.80,680.40 1098.90,680.40 1105.00,680.40 1111.10,680.40 1117.20,680.40 1123.30,680.40 1129.40,672.51 1135.50,680.40 1141.60,680.40 1147.70,680.40 1153.80,680.40 1159.90,680.40 1166.00,672.51 1172.10,680.40 1178.20,656.73 1184.30,680.40 1190.40,672.51 1196.50,672.51 1202.60,680.40 1208.70,680.40 1214.80,680.40 1220.90,680.40 1227.00,672.51 1233.10,664.62 1239.20,656.73 1245.30,680.40 1251.40,680.40 1257.50,672.51 1263.60,680.40 1269.70,680.40 1275.80,680.40 1281.90,672.51 1288.00,672.51 1294.10,680.40 1300.20,680.40 1306.30,672.51 1312.40,680.40 1318.50,680.40 1324.60,680.40 1330.70,680.40 1336.80,680.40 1342.90,672.51 1349.00,672.51 1355.10,680.40 1361.20,680.40 1367.30,680.40 1373.40,672.51 1379.50,680.40 1385.60,656.73 1391.70,672.51 1397.80,680.40 1403.90,680.40 1410.00,680.40" fill="none" stroke="#2a7ab8" stroke-width="4" stroke-linejoin="round" stroke-linecap="butt"/><rect x="722.4" y="679.20" width="689.6" height="2.4" fill="#0d2b44" opacity="0.75"/></g>
<g id="chart2"><defs><linearGradient id="bgc783" x1="0" y1="0" x2="0" y2="1"><stop offset="0" stop-color="#bfd3ee"/><stop offset="0.08" stop-color="#c3d6ef"/><stop offset="0.5" stop-color="#dbe5f5"/><stop offset="1" stop-color="#f3f6fc"/></linearGradient><pattern id="stc783" x="691.7" y="0" width="12.2" height="10" patternUnits="userSpaceOnUse"><rect x="0" y="0" width="5" height="10" fill="#f1f4fc"/></pattern><linearGradient id="hzc783" x1="0" y1="0" x2="1" y2="0"><stop offset="0" stop-color="#b9cdec" stop-opacity="0.55"/><stop offset="0.12" stop-color="#c9d9f0" stop-opacity="0"/><stop offset="0.9" stop-color="#c9d9f0" stop-opacity="0"/><stop offset="1" stop-color="#bdd0ee" stop-opacity="0.5"/></linearGradient></defs><rect x="632" y="783.4" width="800" height="229.5" fill="url(#bgc783)"/><rect x="632" y="783.4" width="800" height="1.6" fill="#b7cbe2" opacity="0.8"/><rect x="690.2" y="800" width="721.8" height="157.8" fill="#e2e6f0"/><rect x="690.2" y="800" width="721.8" height="157.8" fill="url(#stc783)" opacity="0.5"/><rect x="690.2" y="799.3" width="721.8" height="1.4" fill="#b3bfca" opacity="0.8"/><rect x="1411.8" y="800" width="1.6" height="157.8" fill="#c3c8dc" opacity="0.9"/><rect x="690.2" y="925.49" width="721.8" height="1.5" fill="#c9cdd2" opacity="1"/><rect x="690.2" y="893.93" width="721.8" height="1.5" fill="#c9cdd2" opacity="1"/><rect x="690.2" y="862.37" width="721.8" height="1.5" fill="#c9cdd2" opacity="1"/><rect x="690.2" y="830.81" width="721.8" height="1.5" fill="#c9cdd2" opacity="1"/><rect x="689.1" y="799.00" width="2.2" height="159.80" fill="#323d48"/><rect x="682.7" y="956.80" width="7" height="2" fill="#323d48" opacity="1"/><text transform="translate(678.6,965.30) scale(0.955,1)" text-anchor="end" class="ca">0</text><rect x="682.7" y="925.24" width="7" height="2" fill="#323d48" opacity="0.35"/><text transform="translate(678.6,933.74) scale(0.955,1)" text-anchor="end" class="ca">2</text><rect x="682.7" y="893.68" width="7" height="2" fill="#323d48" opacity="1"/><text transform="translate(678.6,902.18) scale(0.955,1)" text-anchor="end" class="ca">4</text><rect x="682.7" y="862.12" width="7" height="2" fill="#323d48" opacity="1"/><text transform="translate(678.6,870.62) scale(0.955,1)" text-anchor="end" class="ca">6</text><rect x="682.7" y="830.56" width="7" height="2" fill="#323d48" opacity="0.35"/><text transform="translate(678.6,839.06) scale(0.955,1)" text-anchor="end" class="ca">8</text><rect x="682.7" y="799.00" width="7" height="2" fill="#323d48" opacity="1"/><text transform="translate(678.6,807.50) scale(0.955,1)" text-anchor="end" class="ca">10</text><rect x="689.35" y="957.80" width="1.7" height="6.5" fill="#1d2730" opacity="0.95"/><rect x="695.45" y="957.80" width="1.7" height="5.5" fill="#1d2730" opacity="0.8"/><rect x="701.55" y="957.80" width="1.7" height="5.5" fill="#1d2730" opacity="0.8"/><rect x="707.65" y="957.80" width="1.7" height="5.5" fill="#1d2730" opacity="0.5"/><rect x="713.75" y="957.80" width="1.7" height="5.5" fill="#1d2730" opacity="0.8"/><rect x="719.85" y="957.80" width="1.7" height="5.5" fill="#1d2730" opacity="0.8"/><rect x="725.95" y="957.80" width="1.7" height="5.5" fill="#1d2730" opacity="0.5"/><rect x="732.05" y="957.80" width="1.7" height="5.5" fill="#1d2730" opacity="0.8"/><rect x="738.15" y="957.80" width="1.7" height="6.5" fill="#1d2730" opacity="0.95"/><rect x="744.25" y="957.80" width="1.7" height="5.5" fill="#1d2730" opacity="0.5"/><rect x="750.35" y="957.80" width="1.7" height="5.5" fill="#1d2730" opacity="0.8"/><rect x="756.45" y="957.80" width="1.7" height="5.5" fill="#1d2730" opacity="0.8"/><rect x="762.55" y="957.80" width="1.7" height="5.5" fill="#1d2730" opacity="0.5"/><rect x="768.65" y="957.80" width="1.7" height="5.5" fill="#1d2730" opacity="0.8"/><rect x="774.75" y="957.80" width="1.7" height="5.5" fill="#1d2730" opacity="0.8"/><rect x="780.85" y="957.80" width="1.7" height="5.5" fill="#1d2730" opacity="0.5"/><rect x="786.95" y="957.80" width="1.7" height="6.5" fill="#1d2730" opacity="0.95"/><rect x="793.05" y="957.80" width="1.7" height="5.5" fill="#1d2730" opacity="0.8"/><rect x="799.15" y="957.80" width="1.7" height="5.5" fill="#1d2730" opacity="0.5"/><rect x="805.25" y="957.80" width="1.7" height="5.5" fill="#1d2730" opacity="0.8"/><rect x="811.35" y="957.80" width="1.7" height="5.5" fill="#1d2730" opacity="0.8"/><rect x="817.45" y="957.80" width="1.7" height="5.5" fill="#1d2730" opacity="0.5"/><rect x="823.55" y="957.80" width="1.7" height="5.5" fill="#1d2730" opacity="0.8"/><rect x="829.65" y="957.80" width="1.7" height="5.5" fill="#1d2730" opacity="0.8"/><rect x="835.75" y="957.80" width="1.7" height="6.5" fill="#1d2730" opacity="0.95"/><rect x="841.85" y="957.80" width="1.7" height="5.5" fill="#1d2730" opacity="0.8"/><rect x="847.95" y="957.80" width="1.7" height="5.5" fill="#1d2730" opacity="0.8"/><rect x="854.05" y="957.80" width="1.7" height="5.5" fill="#1d2730" opacity="0.5"/><rect x="860.15" y="957.80" width="1.7" height="5.5" fill="#1d2730" opacity="0.8"/><rect x="866.25" y="957.80" width="1.7" height="5.5" fill="#1d2730" opacity="0.8"/><rect x="872.35" y="957.80" width="1.7" height="5.5" fill="#1d2730" opacity="0.5"/><rect x="878.45" y="957.80" width="1.7" height="5.5" fill="#1d2730" opacity="0.8"/><rect x="884.55" y="957.80" width="1.7" height="6.5" fill="#1d2730" opacity="0.95"/><rect x="890.65" y="957.80" width="1.7" height="5.5" fill="#1d2730" opacity="0.5"/><rect x="896.75" y="957.80" width="1.7" height="5.5" fill="#1d2730" opacity="0.8"/><rect x="902.85" y="957.80" width="1.7" height="5.5" fill="#1d2730" opacity="0.8"/><rect x="908.95" y="957.80" width="1.7" height="5.5" fill="#1d2730" opacity="0.5"/><rect x="915.05" y="957.80" width="1.7" height="5.5" fill="#1d2730" opacity="0.8"/><rect x="921.15" y="957.80" width="1.7" height="5.5" fill="#1d2730" opacity="0.8"/><rect x="927.25" y="957.80" width="1.7" height="5.5" fill="#1d2730" opacity="0.5"/><rect x="933.35" y="957.80" width="1.7" height="6.5" fill="#1d2730" opacity="0.95"/><rect x="939.45" y="957.80" width="1.7" height="5.5" fill="#1d2730" opacity="0.8"/><rect x="945.55" y="957.80" width="1.7" height="5.5" fill="#1d2730" opacity="0.5"/><rect x="951.65" y="957.80" width="1.7" height="5.5" fill="#1d2730" opacity="0.8"/><rect x="957.75" y="957.80" width="1.7" height="5.5" fill="#1d2730" opacity="0.8"/><rect x="963.85" y="957.80" width="1.7" height="5.5" fill="#1d2730" opacity="0.5"/><rect x="969.95" y="957.80" width="1.7" height="5.5" fill="#1d2730" opacity="0.8"/><rect x="976.05" y="957.80" width="1.7" height="5.5" fill="#1d2730" opacity="0.8"/><rect x="982.15" y="957.80" width="1.7" height="6.5" fill="#1d2730" opacity="0.95"/><rect x="988.25" y="957.80" width="1.7" height="5.5" fill="#1d2730" opacity="0.8"/><rect x="994.35" y="957.80" width="1.7" height="5.5" fill="#1d2730" opacity="0.8"/><rect x="1000.45" y="957.80" width="1.7" height="5.5" fill="#1d2730" opacity="0.5"/><rect x="1006.55" y="957.80" width="1.7" height="5.5" fill="#1d2730" opacity="0.8"/><rect x="1012.65" y="957.80" width="1.7" height="5.5" fill="#1d2730" opacity="0.8"/><rect x="1018.75" y="957.80" width="1.7" height="5.5" fill="#1d2730" opacity="0.5"/><rect x="1024.85" y="957.80" width="1.7" height="5.5" fill="#1d2730" opacity="0.8"/><rect x="1030.95" y="957.80" width="1.7" height="6.5" fill="#1d2730" opacity="0.95"/><rect x="1037.05" y="957.80" width="1.7" height="5.5" fill="#1d2730" opacity="0.5"/><rect x="1043.15" y="957.80" width="1.7" height="5.5" fill="#1d2730" opacity="0.8"/><rect x="1049.25" y="957.80" width="1.7" height="5.5" fill="#1d2730" opacity="0.8"/><rect x="1055.35" y="957.80" width="1.7" height="5.5" fill="#1d2730" opacity="0.5"/><rect x="1061.45" y="957.80" width="1.7" height="5.5" fill="#1d2730" opacity="0.8"/><rect x="1067.55" y="957.80" width="1.7" height="5.5" fill="#1d2730" opacity="0.8"/><rect x="1073.65" y="957.80" width="1.7" height="5.5" fill="#1d2730" opacity="0.5"/><rect x="1079.75" y="957.80" width="1.7" height="6.5" fill="#1d2730" opacity="0.95"/><rect x="1085.85" y="957.80" width="1.7" height="5.5" fill="#1d2730" opacity="0.8"/><rect x="1091.95" y="957.80" width="1.7" height="5.5" fill="#1d2730" opacity="0.5"/><rect x="1098.05" y="957.80" width="1.7" height="5.5" fill="#1d2730" opacity="0.8"/><rect x="1104.15" y="957.80" width="1.7" height="5.5" fill="#1d2730" opacity="0.8"/><rect x="1110.25" y="957.80" width="1.7" height="5.5" fill="#1d2730" opacity="0.5"/><rect x="1116.35" y="957.80" width="1.7" height="5.5" fill="#1d2730" opacity="0.8"/><rect x="1122.45" y="957.80" width="1.7" height="5.5" fill="#1d2730" opacity="0.8"/><rect x="1128.55" y="957.80" width="1.7" height="6.5" fill="#1d2730" opacity="0.95"/><rect x="1134.65" y="957.80" width="1.7" height="5.5" fill="#1d2730" opacity="0.8"/><rect x="1140.75" y="957.80" width="1.7" height="5.5" fill="#1d2730" opacity="0.8"/><rect x="1146.85" y="957.80" width="1.7" height="5.5" fill="#1d2730" opacity="0.5"/><rect x="1152.95" y="957.80" width="1.7" height="5.5" fill="#1d2730" opacity="0.8"/><rect x="1159.05" y="957.80" width="1.7" height="5.5" fill="#1d2730" opacity="0.8"/><rect x="1165.15" y="957.80" width="1.7" height="5.5" fill="#1d2730" opacity="0.5"/><rect x="1171.25" y="957.80" width="1.7" height="5.5" fill="#1d2730" opacity="0.8"/><rect x="1177.35" y="957.80" width="1.7" height="6.5" fill="#1d2730" opacity="0.95"/><rect x="1183.45" y="957.80" width="1.7" height="5.5" fill="#1d2730" opacity="0.5"/><rect x="1189.55" y="957.80" width="1.7" height="5.5" fill="#1d2730" opacity="0.8"/><rect x="1195.65" y="957.80" width="1.7" height="5.5" fill="#1d2730" opacity="0.8"/><rect x="1201.75" y="957.80" width="1.7" height="5.5" fill="#1d2730" opacity="0.5"/><rect x="1207.85" y="957.80" width="1.7" height="5.5" fill="#1d2730" opacity="0.8"/><rect x="1213.95" y="957.80" width="1.7" height="5.5" fill="#1d2730" opacity="0.8"/><rect x="1220.05" y="957.80" width="1.7" height="5.5" fill="#1d2730" opacity="0.5"/><rect x="1226.15" y="957.80" width="1.7" height="6.5" fill="#1d2730" opacity="0.95"/><rect x="1232.25" y="957.80" width="1.7" height="5.5" fill="#1d2730" opacity="0.8"/><rect x="1238.35" y="957.80" width="1.7" height="5.5" fill="#1d2730" opacity="0.5"/><rect x="1244.45" y="957.80" width="1.7" height="5.5" fill="#1d2730" opacity="0.8"/><rect x="1250.55" y="957.80" width="1.7" height="5.5" fill="#1d2730" opacity="0.8"/><rect x="1256.65" y="957.80" width="1.7" height="5.5" fill="#1d2730" opacity="0.5"/><rect x="1262.75" y="957.80" width="1.7" height="5.5" fill="#1d2730" opacity="0.8"/><rect x="1268.85" y="957.80" width="1.7" height="5.5" fill="#1d2730" opacity="0.8"/><rect x="1274.95" y="957.80" width="1.7" height="6.5" fill="#1d2730" opacity="0.95"/><rect x="1281.05" y="957.80" width="1.7" height="5.5" fill="#1d2730" opacity="0.8"/><rect x="1287.15" y="957.80" width="1.7" height="5.5" fill="#1d2730" opacity="0.8"/><rect x="1293.25" y="957.80" width="1.7" height="5.5" fill="#1d2730" opacity="0.5"/><rect x="1299.35" y="957.80" width="1.7" height="5.5" fill="#1d2730" opacity="0.8"/><rect x="1305.45" y="957.80" width="1.7" height="5.5" fill="#1d2730" opacity="0.8"/><rect x="1311.55" y="957.80" width="1.7" height="5.5" fill="#1d2730" opacity="0.5"/><rect x="1317.65" y="957.80" width="1.7" height="5.5" fill="#1d2730" opacity="0.8"/><rect x="1323.75" y="957.80" width="1.7" height="6.5" fill="#1d2730" opacity="0.95"/><rect x="1329.85" y="957.80" width="1.7" height="5.5" fill="#1d2730" opacity="0.5"/><rect x="1335.95" y="957.80" width="1.7" height="5.5" fill="#1d2730" opacity="0.8"/><rect x="1342.05" y="957.80" width="1.7" height="5.5" fill="#1d2730" opacity="0.8"/><rect x="1348.15" y="957.80" width="1.7" height="5.5" fill="#1d2730" opacity="0.5"/><rect x="1354.25" y="957.80" width="1.7" height="5.5" fill="#1d2730" opacity="0.8"/><rect x="1360.35" y="957.80" width="1.7" height="5.5" fill="#1d2730" opacity="0.8"/><rect x="1366.45" y="957.80" width="1.7" height="5.5" fill="#1d2730" opacity="0.5"/><rect x="1372.55" y="957.80" width="1.7" height="6.5" fill="#1d2730" opacity="0.95"/><rect x="1378.65" y="957.80" width="1.7" height="5.5" fill="#1d2730" opacity="0.8"/><rect x="1384.75" y="957.80" width="1.7" height="5.5" fill="#1d2730" opacity="0.5"/><rect x="1390.85" y="957.80" width="1.7" height="5.5" fill="#1d2730" opacity="0.8"/><rect x="1396.95" y="957.80" width="1.7" height="5.5" fill="#1d2730" opacity="0.8"/><rect x="1403.05" y="957.80" width="1.7" height="5.5" fill="#1d2730" opacity="0.5"/><rect x="1409.15" y="957.80" width="1.7" height="5.5" fill="#1d2730" opacity="0.8"/><text transform="translate(690.50,985.80) scale(0.955,1)" text-anchor="middle" class="ca">30</text><text transform="translate(689.30,1004.70) scale(0.955,1)" text-anchor="middle" class="ca">Jan</text><text transform="translate(739.14,985.80) scale(0.955,1)" text-anchor="middle" class="ca">07</text><text transform="translate(737.94,1004.70) scale(0.955,1)" text-anchor="middle" class="ca">Feb</text><text transform="translate(787.78,985.80) scale(0.955,1)" text-anchor="middle" class="ca">15</text><text transform="translate(836.42,985.80) scale(0.955,1)" text-anchor="middle" class="ca">23</text><text transform="translate(885.06,985.80) scale(0.955,1)" text-anchor="middle" class="ca">03</text><text transform="translate(883.86,1004.70) scale(0.955,1)" text-anchor="middle" class="ca">Mar</text><text transform="translate(933.70,985.80) scale(0.955,1)" text-anchor="middle" class="ca">11</text><text transform="translate(982.34,985.80) scale(0.955,1)" text-anchor="middle" class="ca">19</text><text transform="translate(1030.98,985.80) scale(0.955,1)" text-anchor="middle" class="ca">27</text><text transform="translate(1079.62,985.80) scale(0.955,1)" text-anchor="middle" class="ca">04</text><text transform="translate(1078.42,1004.70) scale(0.955,1)" text-anchor="middle" class="ca">Apr</text><text transform="translate(1128.26,985.80) scale(0.955,1)" text-anchor="middle" class="ca">12</text><text transform="translate(1176.90,985.80) scale(0.955,1)" text-anchor="middle" class="ca">20</text><text transform="translate(1225.54,985.80) scale(0.955,1)" text-anchor="middle" class="ca">28</text><text transform="translate(1274.18,985.80) scale(0.955,1)" text-anchor="middle" class="ca">06</text><text transform="translate(1272.98,1004.70) scale(0.955,1)" text-anchor="middle" class="ca">May</text><text transform="translate(1322.82,985.80) scale(0.955,1)" text-anchor="middle" class="ca">14</text><text transform="translate(1371.46,985.80) scale(0.955,1)" text-anchor="middle" class="ca">22</text><text x="806" y="837.30" class="ct">Referring domains discovered (non-cumulative view)</text><rect x="682.2" y="956.50" width="729.8" height="2.6" fill="#16222c"/><polyline points="714.60,942.02 720.70,942.02 726.80,957.80 732.90,957.80 739.00,957.80 745.10,957.80 751.20,957.80 757.30,957.80 763.40,957.80 769.50,957.80 775.60,957.80 781.70,957.80 787.80,957.80 793.90,957.80 800.00,957.80 806.10,957.80 812.20,942.02 818.30,957.80 824.40,957.80 830.50,957.80 836.60,957.80 842.70,957.80 848.80,957.80 854.90,957.80 861.00,957.80 867.10,957.80 873.20,957.80 879.30,957.80 885.40,957.80 891.50,957.80 897.60,957.80 903.70,957.80 909.80,942.02 915.90,957.80 922.00,957.80 928.10,957.80 934.20,957.80 940.30,957.80 946.40,957.80 952.50,957.80 958.60,957.80 964.70,957.80 970.80,957.80 976.90,957.80 983.00,957.80 989.10,957.80 995.20,957.80 1001.30,957.80 1007.40,957.80 1013.50,957.80 1019.60,942.02 1025.70,957.80 1031.80,942.02 1037.90,957.80 1044.00,957.80 1050.10,957.80 1056.20,957.80 1062.30,957.80 1068.40,957.80 1074.50,957.80 1080.60,957.80 1086.70,957.80 1092.80,957.80 1098.90,957.80 1105.00,957.80 1111.10,957.80 1117.20,957.80 1123.30,957.80 1129.40,942.02 1135.50,957.80 1141.60,957.80 1147.70,957.80 1153.80,957.80 1159.90,957.80 1166.00,942.02 1172.10,957.80 1178.20,957.80 1184.30,957.80 1190.40,957.80 1196.50,957.80 1202.60,957.80 1208.70,957.80 1214.80,957.80 1220.90,957.80 1227.00,957.80 1233.10,942.02 1239.20,957.80 1245.30,957.80 1251.40,957.80 1257.50,942.02 1263.60,957.80 1269.70,957.80 1275.80,957.80 1281.90,957.80 1288.00,942.02 1294.10,957.80 1300.20,957.80 1306.30,957.80 1312.40,957.80 1318.50,957.80 1324.60,957.80 1330.70,957.80 1336.80,957.80 1342.90,957.80 1349.00,957.80 1355.10,957.80 1361.20,957.80 1367.30,957.80 1373.40,957.80 1379.50,957.80 1385.60,942.02 1391.70,942.02 1397.80,957.80 1403.90,957.80 1410.00,957.80" fill="none" stroke="#2a7ab8" stroke-width="4" stroke-linejoin="round" stroke-linecap="butt"/><rect x="734.6" y="956.60" width="677.4" height="2.4" fill="#0d2b44" opacity="0.75"/></g>
</svg>
</body>
</html>
